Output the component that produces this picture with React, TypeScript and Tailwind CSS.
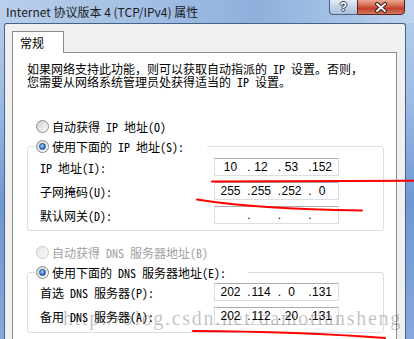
import React from 'react';

function Radio({ checked, disabled }: { checked?: boolean; disabled?: boolean }) {
  return (
    <span
      className={
        disabled
          ? 'flex h-[13px] w-[13px] shrink-0 items-center justify-center rounded-full border border-[#c9c9c9] bg-[linear-gradient(135deg,#e6e6e6,#fafafa)]'
          : 'flex h-[13px] w-[13px] shrink-0 items-center justify-center rounded-full border border-[#8b8b8b] bg-[linear-gradient(135deg,#cfcfcf,#ffffff)]'
      }
    >
      {checked && (
        <span className="h-[7px] w-[7px] rounded-full border border-[#1b4f8f] bg-[radial-gradient(circle_at_40%_35%,#b5dcff,#3a7fd0_55%,#124d9c)]" />
      )}
    </span>
  );
}

function IpBox({ parts }: { parts: string[] }) {
  return (
    <div className="flex h-[18px] w-[125px] items-center border border-[#dadfe6] border-t-[#abadb3] bg-white pl-[5px] font-['Liberation_Sans',sans-serif] text-[12px] leading-[14px] text-black">
      {parts.map((p, i) => (
        <React.Fragment key={i}>
          <span className="w-[21px] text-center">{p}</span>
          {i < 3 && <span className="w-[9.5px] text-right">.</span>}
        </React.Fragment>
      ))}
    </div>
  );
}

function Row({ label, parts }: { label: string; parts: string[] }) {
  return (
    <div className="flex h-[18px] items-center">
      <span className="w-[174px]">{label}</span>
      <IpBox parts={parts} />
    </div>
  );
}

export default function App() {
  return (
    <div className="relative h-[339px] w-[414px] overflow-hidden bg-[linear-gradient(180deg,#b7cfec_0%,#9dbbe3_30%,#6f98d2_60%,#86a8da_100%)] text-[12px] leading-[13px] text-black">
      {/* title bar */}
      <div className="flex h-[23px] items-start bg-[linear-gradient(90deg,#b9cfeb_0%,#a6c1e5_30%,#8fb0dc_62%,#a9c3e6_85%,#c0d4ee_100%)]">
        <div className="pl-[6px] pt-[5px] font-['Noto_Sans_CJK_SC',sans-serif] text-[12px] leading-[13px] text-[#1b1b1b]">
          Internet 协议版本 4 (TCP/IPv4) 属性
        </div>
        <div className="-mt-px ml-auto mr-[9px] flex h-[16px]">
          <div className="flex w-[28px] items-center justify-center rounded-bl-[4px] border border-r-0 border-[#4a6284] bg-[linear-gradient(180deg,#e6edf7_0%,#c3d3e8_50%,#a9bfdc_100%)]">
            <span className="font-['Liberation_Sans',sans-serif] text-[12px] font-bold leading-[12px] text-white [text-shadow:1px_0_0_#2c3e58,-1px_0_0_#2c3e58,0_1px_0_#2c3e58,0_-1px_0_#2c3e58]">
              ?
            </span>
          </div>
          <div className="flex w-[48px] items-center justify-center rounded-br-[4px] border border-[#5b2419] bg-[linear-gradient(180deg,#e9a995_0%,#d36a52_40%,#c2402b_60%,#d2785f_100%)]">
            <svg width="14" height="11" viewBox="0 0 14 11">
              <path d="M3 2 L11 9 M11 2 L3 9" stroke="#3b1a14" strokeWidth="4" strokeLinecap="round" />
              <path d="M3 2 L11 9 M11 2 L3 9" stroke="#ffffff" strokeWidth="2" strokeLinecap="round" />
            </svg>
          </div>
        </div>
      </div>

      {/* dialog body */}
      <div className="ml-[4px] h-[316px] w-[402px] rounded-t-[3px] border border-b-0 border-[#44618a] bg-[#f0f0f0] pl-[7px] pt-[7px] font-['Noto_Sans_Mono_CJK_SC','Noto_Sans_CJK_SC',monospace]">
        <div className="relative z-10 -mb-px h-[22px] w-[52px] border border-b-0 border-[#898c95] bg-white pl-[7px] pt-[4px]">
          常规
        </div>
        <div className="h-[300px] w-[385px] border border-[#898c95] bg-white">
          <p className="ml-[14px] mt-[9px] leading-[13px]">
            如果网络支持此功能，则可以获取自动指派的 IP 设置。否则，
            <br />
            您需要从网络系统管理员处获得适当的 IP 设置。
          </p>

          <div className="ml-[23px] mt-[28px] flex h-[20px] items-center gap-[3px]">
            <Radio />
            <span>自动获得 IP 地址(O)</span>
          </div>

          <fieldset className="ml-[14px] w-[357px] rounded-[3px] border border-[#d5dfe5] pb-[6px]">
            <legend className="ml-[7px] w-[172px] pl-[1px]">
              <div className="flex h-[20px] items-center gap-[3px]">
                <Radio checked />
                <span>使用下面的 IP 地址(S):</span>
              </div>
            </legend>
            <div className="flex flex-col gap-[6px] pl-[12px] pt-[2px]">
              <Row label="IP 地址(I):" parts={['10', '12', '53', '152']} />
              <Row label="子网掩码(U):" parts={['255', '255', '252', '0']} />
              <Row label="默认网关(D):" parts={['', '', '', '']} />
            </div>
          </fieldset>

          <div className="ml-[23px] mt-[11px] flex h-[20px] items-center gap-[3px] text-[#a0a0a0]">
            <Radio disabled />
            <span>自动获得 DNS 服务器地址(B)</span>
          </div>

          <fieldset className="ml-[14px] w-[357px] rounded-[3px] border border-[#d5dfe5] pb-[7px]">
            <legend className="ml-[7px] w-[213px] pl-[1px]">
              <div className="flex h-[20px] items-center gap-[3px]">
                <Radio checked />
                <span>使用下面的 DNS 服务器地址(E):</span>
              </div>
            </legend>
            <div className="flex flex-col gap-[6px] pl-[12px] pt-[1px]">
              <Row label="首选 DNS 服务器(P):" parts={['202', '114', '0', '131']} />
              <Row label="备用 DNS 服务器(A):" parts={['202', '112', '20', '131']} />
            </div>
          </fieldset>
        </div>
      </div>

      {/* watermark */}
      <div className="pointer-events-none absolute left-[63px] top-[308px] whitespace-nowrap font-['Liberation_Serif',serif] text-[20px] leading-[20px] tracking-[1.7px] text-black/25">
        http://blog.csdn.net/damotiansheng
      </div>

      {/* red annotation strokes */}
      <svg className="pointer-events-none absolute inset-0" width="414" height="339" viewBox="0 0 414 339">
        <path d="M212 181.5 L414 180.8" stroke="#f00" strokeWidth="2" fill="none" strokeLinecap="round" />
        <path d="M197 199.5 Q255 209 362 210.5" stroke="#f00" strokeWidth="2" fill="none" strokeLinecap="round" />
        <path d="M193 331 Q300 331.5 385 338" stroke="#f00" strokeWidth="2" fill="none" strokeLinecap="round" />
      </svg>
    </div>
  );
}
